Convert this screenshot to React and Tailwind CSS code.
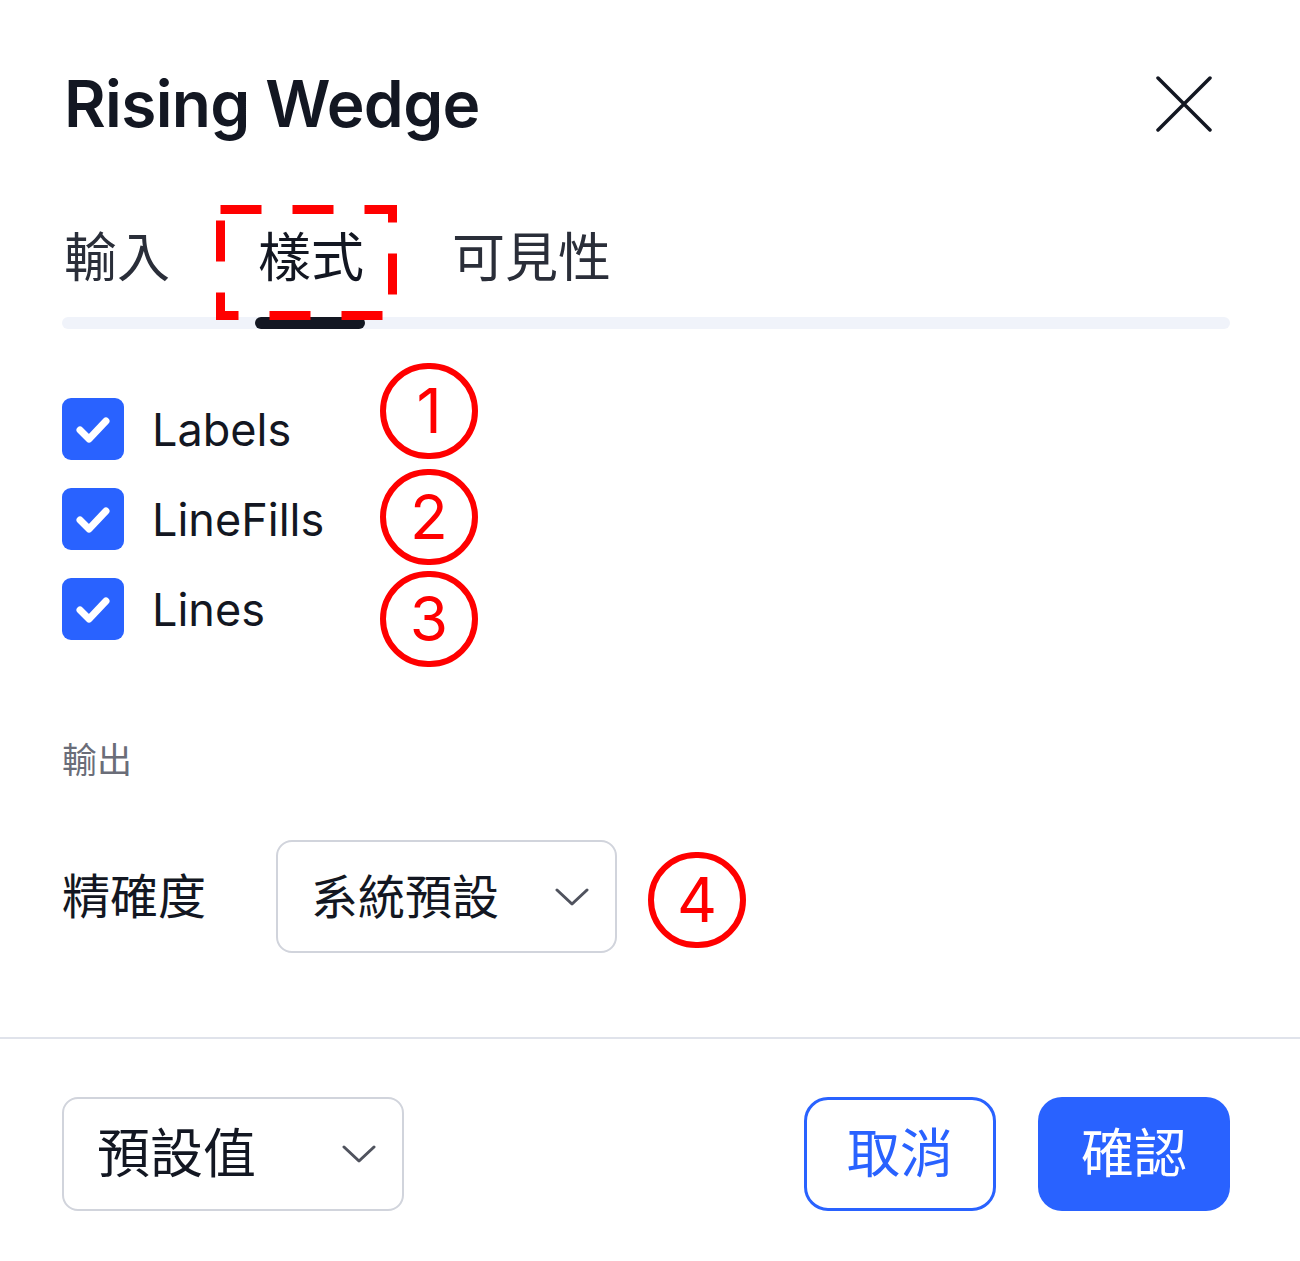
import React from 'react'

const cjk = { fontFamily: 'Inter, "Noto Sans CJK TC", sans-serif' }

const Chevron = ({ className = '' }) => (
  <svg viewBox="0 0 34 18" className={className} fill="none" stroke="#50535e" strokeWidth="3" strokeLinecap="round" strokeLinejoin="round">
    <path d="M2 2 L17 16 L32 2" />
  </svg>
)

const Checkbox = ({ label }) => (
  <div className="flex h-[62px] items-center gap-[28px]">
    <div className="flex h-[62px] w-[62px] items-center justify-center rounded-[9px] bg-[#2962ff]">
      <svg viewBox="0 0 62 62" className="h-[62px] w-[62px]" fill="none" stroke="#ffffff" strokeWidth="7" strokeLinecap="round" strokeLinejoin="round">
        <path d="M18 32 L27 41 L44 23" />
      </svg>
    </div>
    <span className="text-[45px] leading-none text-[#131722]">{label}</span>
  </div>
)

const Mark = ({ n, className }) => (
  <div className={`absolute flex h-[96px] w-[98px] items-center justify-center rounded-full border-[6px] border-[#ff0000] text-[62px] leading-none text-[#ff0000] ${className}`}>
    {n}
  </div>
)

const App = () => {
  return (
    <div className="relative h-[1261px] w-[1300px] overflow-hidden bg-white" style={cjk}>
      <div className="px-[62px] pr-[70px]">
        <div className="mt-[64px] flex h-[80px] items-center justify-between">
          <h1 className="ml-[2px] text-[64px] font-semibold leading-none tracking-[-0.01em] text-[#131722]">Rising Wedge</h1>
          <button type="button" className="mr-[18px] flex h-[56px] w-[56px] items-center justify-center">
            <svg viewBox="0 0 56 56" className="h-[56px] w-[56px]" fill="none" stroke="#131722" strokeWidth="3.5" strokeLinecap="round">
              <path d="M2 2 L54 54 M54 2 L2 54" />
            </svg>
          </button>
        </div>

        <div className="mt-[88px] flex items-center gap-[88px] pl-[2px] text-[53px] leading-none">
          <span className="text-[#2a2e39]">輸入</span>
          <span className="text-[#131722]">樣式</span>
          <span className="text-[#2a2e39]">可見性</span>
        </div>
        <div className="mt-[32px] h-[12px] rounded-full bg-[#f0f3fa] pl-[193px]">
          <div className="h-full w-[110px] rounded-full bg-[#131722]" />
        </div>

        <div className="mt-[69px] flex flex-col gap-[28px]">
          <Checkbox label="Labels" />
          <Checkbox label="LineFills" />
          <Checkbox label="Lines" />
        </div>

        <div className="mt-[103px] text-[35px] leading-none text-[#6a6d78]">輸出</div>

        <div className="mt-[62px] flex items-center gap-[70px]">
          <span className="text-[48px] leading-none text-[#131722]">精確度</span>
          <div className="flex h-[113px] w-[341px] items-center justify-between rounded-[16px] border-2 border-[#d1d4dc] pl-[33px] pr-[26px]">
            <span className="text-[47px] leading-none text-[#131722]">系統預設</span>
            <Chevron className="h-[18px] w-[34px]" />
          </div>
        </div>
      </div>

      <div className="mt-[84px] h-[2px] w-full bg-[#e0e3eb]" />

      <div className="mt-[58px] flex items-center justify-between pl-[62px] pr-[70px]">
        <div className="flex h-[114px] w-[342px] items-center justify-between rounded-[16px] border-2 border-[#d1d4dc] pl-[33px] pr-[26px]">
          <span className="text-[53px] leading-none text-[#131722]">預設值</span>
          <Chevron className="h-[18px] w-[34px]" />
        </div>
        <div className="flex gap-[42px]">
          <button type="button" className="flex h-[114px] w-[192px] items-center justify-center rounded-[24px] border-[3px] border-[#2962ff] text-[53px] leading-none text-[#2962ff]">
            取消
          </button>
          <button type="button" className="flex h-[114px] w-[192px] items-center justify-center rounded-[24px] bg-[#2962ff] text-[53px] leading-none text-white">
            確認
          </button>
        </div>
      </div>

      <svg className="absolute left-[216px] top-[205px] h-[115px] w-[181px]" viewBox="0 0 181 115" fill="none">
        <rect x="4.5" y="4.5" width="172" height="106" stroke="#ff0000" strokeWidth="9" strokeDasharray="41 31" />
      </svg>
      <Mark n="1" className="left-[380px] top-[363px]" />
      <Mark n="2" className="left-[380px] top-[469px]" />
      <Mark n="3" className="left-[380px] top-[571px]" />
      <Mark n="4" className="left-[648px] top-[852px]" />
    </div>
  )
}

export default App
